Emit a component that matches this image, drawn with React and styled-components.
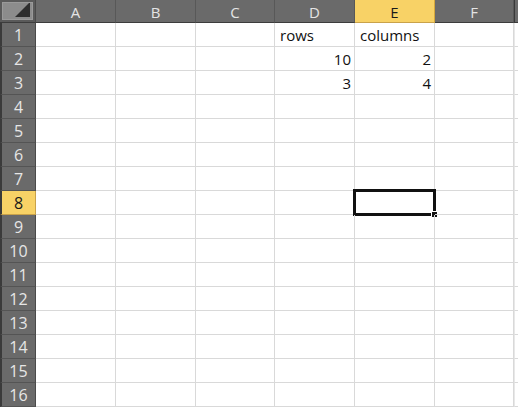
import React from "react";
import styled, { createGlobalStyle } from "styled-components";

const GlobalStyle = createGlobalStyle`
  html, body { margin: 0; padding: 0; background: #ffffff; }
  body { font-family: "Open Sans", "Liberation Sans", sans-serif; overflow: hidden; }
`;

const COLS = ["A", "B", "C", "D", "E", "F"];
const WIDTHS = [80, 80, 79, 80, 80, 79];
const ROW_COUNT = 16;
const ACTIVE = { col: "E", row: 8 };

// cell values keyed by address
const values = {
  D1: "rows",
  E1: "columns",
  D2: 10,
  E2: 2,
  D3: 3,
  E3: 4,
};

const Sheet = styled.div`
  display: grid;
  grid-template-columns: 36px ${WIDTHS.map((w) => w + "px").join(" ")} 1fr;
  grid-template-rows: 23px repeat(${ROW_COUNT}, 24px);
  width: 518px;
  height: 409px;
  background: #ffffff;
`;

const Corner = styled.div`
  background: #5a5a5a;
  border-bottom: 1px solid #3c3c3c;
  border-right: 1px solid #4a4a4a;
  padding: 2px;
  box-sizing: border-box;
  display: flex;
`;

const CornerBox = styled.div`
  flex: 1;
  background: #8c8c8c;
  position: relative;
  overflow: hidden;
  border: 1px solid #9a9a9a;

  &::after {
    content: "";
    position: absolute;
    right: 2px;
    bottom: 2px;
    width: 0;
    height: 0;
    border-left: 15px solid transparent;
    border-bottom: 15px solid #2e2e2e;
  }
`;

const ColHead = styled.div`
  background: ${(p) => (p.$active ? "#f8d266" : "#6a6a6a")};
  color: ${(p) => (p.$active ? "#1a1a1a" : "#e4e4e4")};
  border-right: 1px solid ${(p) => (p.$active ? "#d6a93c" : "#585858")};
  border-bottom: 1px solid ${(p) => (p.$active ? "#c9a24a" : "#3c3c3c")};
  box-sizing: border-box;
  display: flex;
  align-items: center;
  justify-content: center;
  font-size: 15px;
  padding-top: 1px;
`;

const HeadFill = styled.div`
  background: #6a6a6a;
  border-bottom: 1px solid #3c3c3c;
  border-left: 1px solid #3a3a3a;
  box-sizing: border-box;
`;

const RowHead = styled.div`
  background: ${(p) => (p.$active ? "#f8d266" : "#6a6a6a")};
  color: ${(p) => (p.$active ? "#1a1a1a" : "#e6e6e6")};
  border-left: 2px solid #3a3a3a;
  border-right: 1px solid ${(p) => (p.$active ? "#c9a24a" : "#4a4a4a")};
  border-bottom: 1px solid ${(p) => (p.$active ? "#c9a24a" : "#545454")};
  box-sizing: border-box;
  display: flex;
  align-items: center;
  justify-content: center;
  font-size: 16px;
  padding-top: 1px;
`;

const Cell = styled.div`
  position: relative;
  border-right: 1px solid #d9d9d9;
  border-bottom: 1px solid #d9d9d9;
  box-sizing: border-box;
  display: flex;
  align-items: center;
  justify-content: ${(p) => (p.$num ? "flex-end" : "flex-start")};
  padding: 1px 3px 0 5px;
  font-size: 15px;
  color: #111111;
  white-space: nowrap;
`;

const Tail = styled.div`
  border-bottom: 1px solid #d9d9d9;
  border-left: 1px solid #e8e8e8;
  box-sizing: border-box;
`;

const Selection = styled.div`
  position: absolute;
  left: -2px;
  top: -2px;
  right: -2px;
  bottom: -2px;
  border: 3px solid #111111;
  pointer-events: none;

  &::after {
    content: "";
    position: absolute;
    right: -5px;
    bottom: -5px;
    width: 5px;
    height: 5px;
    background: #111111;
    border: 1px solid #ffffff;
  }
`;

export default function App() {
  const rows = Array.from({ length: ROW_COUNT }, (_, i) => i + 1);
  return (
    <>
      <GlobalStyle />
      <Sheet>
        <Corner>
          <CornerBox />
        </Corner>
        {COLS.map((c) => (
          <ColHead key={c} $active={c === ACTIVE.col}>
            {c}
          </ColHead>
        ))}
        <HeadFill />
        {rows.map((r) => (
          <React.Fragment key={r}>
            <RowHead $active={r === ACTIVE.row}>{r}</RowHead>
            {COLS.map((c) => {
              const v = values[c + r];
              const isActive = c === ACTIVE.col && r === ACTIVE.row;
              return (
                <Cell key={c} $num={typeof v === "number"}>
                  {v}
                  {isActive && <Selection />}
                </Cell>
              );
            })}
            <Tail />
          </React.Fragment>
        ))}
      </Sheet>
    </>
  );
}
